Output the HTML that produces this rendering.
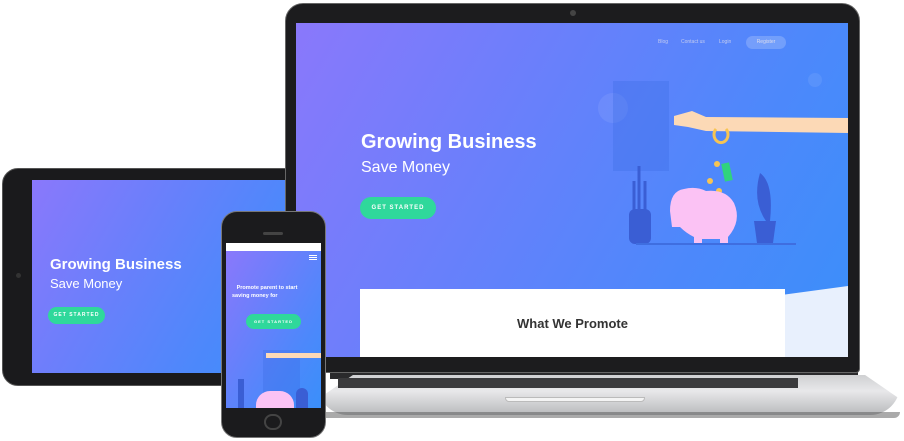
<!DOCTYPE html>
<html><head><style>
*{margin:0;padding:0;box-sizing:border-box}
body{width:904px;height:441px;background:#fff;position:relative;overflow:hidden;font-family:"Liberation Sans",sans-serif}
.abs{position:absolute}
.grad{background:linear-gradient(120deg,#8a78fb 0%,#6b7ffb 35%,#4d88fb 70%,#3a8ffa 100%)}
.btn{background:#2fd89b;border-radius:12px;color:#fff;font-weight:bold;text-align:center;letter-spacing:1px}
</style></head><body>
<!-- tablet -->
<div class="abs" style="left:2px;top:168px;width:300px;height:218px;background:#1a1a1c;border-radius:16px;border:1px solid #555"></div>
<div class="abs" style="left:16px;top:273px;width:5px;height:5px;border-radius:50%;background:#333"></div>
<div class="abs grad" style="left:32px;top:180px;width:270px;height:193px"></div>
<div class="abs" style="left:50px;top:256px;color:#fff;font-size:15px;font-weight:bold">Growing Business</div>
<div class="abs" style="left:50px;top:276px;color:#fff;font-size:13px">Save Money</div>
<div class="abs btn" style="left:48px;top:307px;width:57px;height:17px;font-size:5px;line-height:17px">GET STARTED</div>
<!-- laptop base -->
<div class="abs" style="left:330px;top:357px;width:528px;height:22px;background:#2a2a2c"></div>
<div class="abs" style="left:318px;top:375px;width:582px;height:40px;background:linear-gradient(#cfd0d2,#e8e8ea 40%,#b8b9bb);border-radius:0 0 30px 30px;clip-path:polygon(6% 0,94% 0,100% 60%,100% 100%,0 100%,0 60%)"></div>
<div class="abs" style="left:338px;top:378px;width:460px;height:10px;background:#3a3a3c"></div>
<div class="abs" style="left:505px;top:397px;width:140px;height:5px;background:#f4f4f4;border-radius:0 0 4px 4px;border:1px solid #bbb"></div>
<div class="abs" style="left:320px;top:412px;width:580px;height:6px;background:#555;border-radius:0 0 20px 20px;opacity:.5"></div>
<!-- laptop lid -->
<div class="abs" style="left:285px;top:3px;width:575px;height:370px;background:#1c1c1e;border-radius:18px 18px 4px 4px;border:1px solid #666"></div>
<div class="abs" style="left:570px;top:10px;width:6px;height:6px;border-radius:50%;background:#444"></div>
<div class="abs grad" style="left:296px;top:23px;width:552px;height:334px;overflow:hidden">
 <div class="abs" style="left:362px;top:16px;color:#dde;font-size:5px;opacity:.8">Blog</div>
 <div class="abs" style="left:385px;top:16px;color:#dde;font-size:5px;opacity:.8">Contact us</div>
 <div class="abs" style="left:423px;top:16px;color:#dde;font-size:5px;opacity:.8">Login</div>
 <div class="abs" style="left:450px;top:13px;width:40px;height:13px;border-radius:7px;background:rgba(255,255,255,.2);color:#dde;font-size:5px;line-height:13px;text-align:center">Register</div>
 <div class="abs" style="left:65px;top:108px;color:#fff;font-size:20px;font-weight:bold">Growing Business</div>
 <div class="abs" style="left:65px;top:136px;color:#fff;font-size:16px">Save Money</div>
 <div class="abs btn" style="left:64px;top:174px;width:76px;height:22px;font-size:6px;line-height:22px">GET STARTED</div>
 <div class="abs" style="left:302px;top:70px;width:30px;height:30px;border-radius:50%;background:rgba(255,255,255,.08)"></div>
 <div class="abs" style="left:512px;top:50px;width:14px;height:14px;border-radius:50%;background:rgba(255,255,255,.08)"></div>
 <div class="abs" style="left:317px;top:58px;width:56px;height:90px;background:rgba(60,110,230,.35)"></div>
 <svg class="abs" style="left:310px;top:58px" width="242" height="170">
  <path d="M68 35 L86 30 L100 36 L242 37 L242 52 L100 50 L82 46 L68 44Z" fill="#fcd9b6"/>
  <path d="M110 48 a7 8 0 1 0 10 0" stroke="#f7c453" stroke-width="3" fill="none"/>
  <circle cx="111" cy="83" r="3" fill="#f7c453"/><circle cx="104" cy="100" r="3" fill="#f7c453"/><circle cx="113" cy="110" r="3" fill="#f7c453"/>
  <rect x="117" y="82" width="8" height="18" fill="#30d37e" transform="rotate(-12 121 91)"/>
  <path d="M64 130 q0 -20 14 -22 q12 -3 22 2 q20 -2 28 12 q8 18 -6 34 l0 8 h-8 l0 -6 h-18 l0 6 h-8 l0 -8 q-8 -4 -14 -10 h-8z" fill="#fbc2f4"/>
  <rect x="23" y="128" width="22" height="35" rx="6" fill="#3a5ed4"/>
  <path d="M28 130 v-30 M33 130 v-45 M39 130 v-30" stroke="#3a5ed4" stroke-width="3"/>
  <path d="M148 140 h22 l-3 22 h-16z" fill="#3a5ed4"/>
  <path d="M160 140 q-14 -20 -6 -48 q14 10 10 48z" fill="#3a5ed4"/>
  <path d="M30 163 h160" stroke="#3f6ee0" stroke-width="2"/>
 </svg>
 <div class="abs" style="left:489px;top:263px;width:63px;height:71px;background:#e8f0fd;clip-path:polygon(0 12%,100% 0,100% 100%,0 100%)"></div>
 <div class="abs" style="left:64px;top:266px;width:425px;height:70px;background:#fff"></div>
 <div class="abs" style="left:64px;top:293px;width:425px;text-align:center;color:#333;font-size:13px;font-weight:bold">What We Promote</div>
</div>
<!-- phone -->
<div class="abs" style="left:221px;top:211px;width:105px;height:227px;background:#1b1b1d;border-radius:16px;border:1px solid #777"></div>
<div class="abs" style="left:263px;top:232px;width:20px;height:3px;border-radius:2px;background:#444"></div>
<div class="abs" style="left:264px;top:414px;width:18px;height:16px;border-radius:8px;border:2px solid #444"></div>
<div class="abs" style="left:226px;top:243px;width:95px;height:8px;background:#fff"></div>
<div class="abs grad" style="left:226px;top:251px;width:95px;height:157px;overflow:hidden">
 <div class="abs" style="left:83px;top:4px;width:8px;height:1px;background:#fff;box-shadow:0 2px #fff,0 4px #fff"></div>
 <div class="abs" style="left:6px;top:33px;width:90px;color:#fff;font-size:5.5px;font-weight:bold;line-height:8px">&nbsp;&nbsp;&nbsp;Promote parent to start<br>saving money for</div>
 <div class="abs btn" style="left:20px;top:63px;width:55px;height:15px;font-size:4px;line-height:15px">GET STARTED</div>
 <div class="abs" style="left:37px;top:99px;width:37px;height:50px;background:rgba(60,110,230,.35)"></div>
 <div class="abs" style="left:40px;top:102px;width:55px;height:5px;background:#fcd9b6"></div>
 <div class="abs" style="left:30px;top:140px;width:38px;height:17px;border-radius:14px 14px 0 0;background:#fbc2f4"></div>
 <div class="abs" style="left:70px;top:137px;width:12px;height:20px;background:#3a5ed4;border-radius:6px 6px 0 0"></div>
 <div class="abs" style="left:12px;top:128px;width:6px;height:29px;background:#3a5ed4"></div>
</div>
</body></html>
